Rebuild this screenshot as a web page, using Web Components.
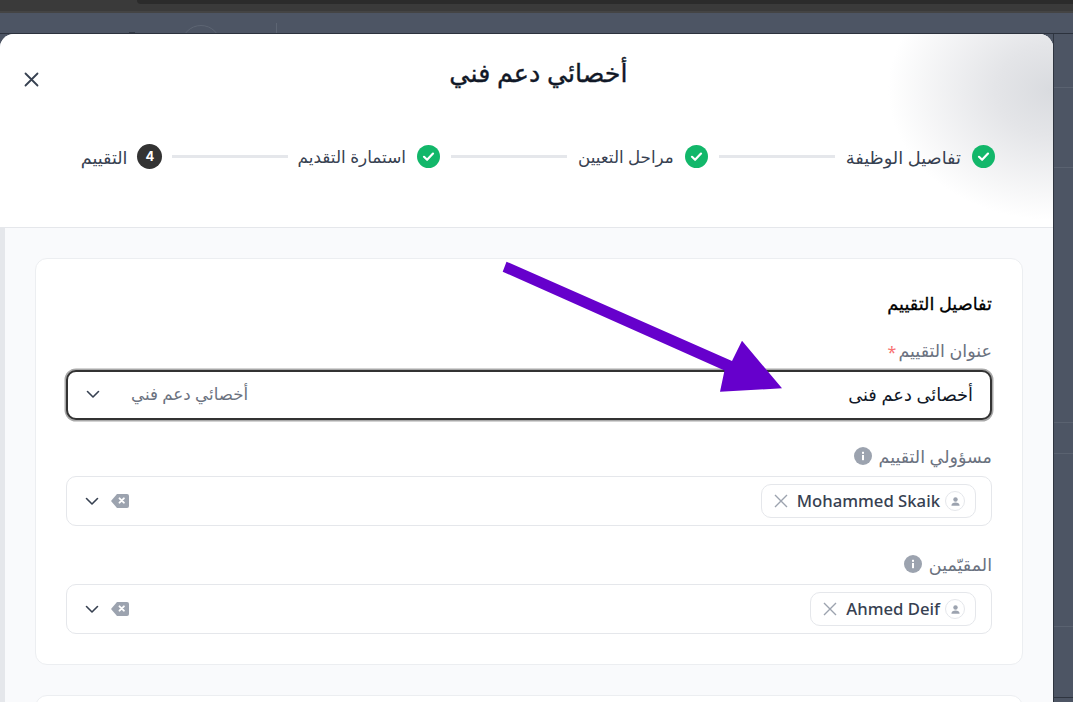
<!DOCTYPE html>
<html lang="ar">
<head>
<meta charset="utf-8">
<title>أخصائي دعم فني</title>
<style>
html, body { margin: 0; padding: 0; height: 100%; overflow: hidden; }
body { font-family: "Noto Sans", "DejaVu Sans", sans-serif; }
</style>
</head>
<body>
<x-page>
  <x-modal heading="أخصائي دعم فني">
    <x-step slot="steps" state="done" size="17.75">تفاصيل الوظيفة</x-step>
    <x-step slot="steps" state="done" size="16.7">مراحل التعيين</x-step>
    <x-step slot="steps" state="done" size="16.9" tight="2" trail="10">استمارة التقديم</x-step>
    <x-step slot="steps" state="current" number="4" last>التقييم</x-step>

    <x-card heading="تفاصيل التقييم">
      <x-field required low="8">
        <span slot="label">عنوان التقييم</span>
        <x-title-select placeholder="أخصائي دعم فني">أخصائى دعم فنى</x-title-select>
      </x-field>
      <x-field info gap="24" low="8">
        <span slot="label">مسؤولي التقييم</span>
        <x-tag-select><x-chip>Mohammed Skaik</x-chip></x-tag-select>
      </x-field>
      <x-field info gap="26" low="8">
        <span slot="label">المقيّمين</span>
        <x-tag-select><x-chip>Ahmed Deif</x-chip></x-tag-select>
      </x-field>
    </x-card>
    <x-card></x-card>
  </x-modal>
  <x-arrow></x-arrow>
</x-page>

<script>
const chevron = `<svg width="16" height="16" viewBox="0 0 16 16" fill="none" stroke="#374151" stroke-width="1.6" stroke-linecap="round" stroke-linejoin="round"><path d="M2.5 5.5 8 11l5.5-5.5"/></svg>`;
const arabic = `"Noto Sans", "DejaVu Sans", sans-serif`;

class XPage extends HTMLElement {
    constructor() {
        super();
        this.attachShadow({ mode: "open" }).innerHTML = `<style>
:host { display: flex; flex-direction: column; position: relative; width: 1073px; height: 702px; overflow: hidden; background: #4d5564; }
.chrome { flex: none; height: 11px; background: #3a3a3a; }
.tab { height: 4px; margin-left: 137px; background: #2b2b2b; border-bottom-left-radius: 8px; }
.edge { flex: none; height: 2px; background: #444; }
.strip { flex: none; height: 20px; position: relative; overflow: hidden; border-bottom: 1px solid #2c323d; }
.avatar { position: absolute; left: 181px; top: 12px; width: 38px; height: 38px; border: 1px solid #5d6573; border-radius: 50%; }
.divider { position: absolute; left: 276px; top: 10px; bottom: 0; width: 1px; background: #5d6573; }
.crumb { position: absolute; left: 129px; top: 19px; width: 6px; height: 1px; background: #333a46; }
.main { flex: 1; display: flex; min-height: 0; }
.gutter { flex: 1; display: flex; flex-direction: column; border-left: 1px solid #2f3540; }
.gutter div { flex: none; box-sizing: border-box; border-bottom: 1px solid #5a6270; }
.gutter div:last-child { border-bottom-color: #2f3540; }
</style>
<div class="chrome"><div class="tab"></div></div>
<div class="edge"></div>
<div class="strip"><div class="crumb"></div><div class="avatar"></div><div class="divider"></div></div>
<div class="main">
  <slot></slot>
  <div class="gutter"><div style="height:54px"></div><div style="height:80px"></div><div style="height:255px"></div><div style="height:31px"></div><div style="height:173px"></div><div style="height:71px"></div></div>
</div>`;
    }
}

class XModal extends HTMLElement {
    constructor() {
        super();
        this.attachShadow({ mode: "open" }).innerHTML = `<style>
:host { display: flex; flex-direction: column; direction: rtl; flex: none; width: 1053px; background: #f9fafc; border-radius: 14px 14px 0 0; overflow: hidden; color: #111827; }
header { flex: none; position: relative; height: 194px; box-sizing: border-box; background: radial-gradient(ellipse 165px 130px at 100% 56px, #d9dbdf 0%, #e4e5e8 35%, rgba(255,255,255,0) 100%), #fff; border-bottom: 1px solid #e5e7eb; }
h1 { margin: 0; padding: 20px 0 0 24px; height: 36px; text-align: center; font: 400 25.4px/36px ${arabic}; -webkit-text-stroke: 0.35px #111827; color: #111827; }
.close { position: absolute; left: 24px; top: 38px; width: 15px; height: 15px; }
.steps { display: flex; align-items: center; padding: 0 58px 0 0; margin-top: 54px; }
.body { flex: 1; display: flex; min-height: 0; }
.scroll { flex: none; width: 5px; background: #e5e7eb; }
.content { flex: 1; min-width: 0; padding: 30px 30px 0 30px; display: flex; flex-direction: column; gap: 30px; }
</style>
<header>
  <h1></h1>
  <svg class="close" viewBox="0 0 15 15" fill="none" stroke="#374151" stroke-width="1.8" stroke-linecap="round"><path d="M1.5 1.5l12 12M13.5 1.5l-12 12"/></svg>
  <div class="steps"><slot name="steps"></slot></div>
</header>
<div class="body">
  <div class="content"><slot></slot></div>
  <div class="scroll"></div>
</div>`;
    }

    connectedCallback() {
        this.shadowRoot.querySelector("h1").textContent = this.getAttribute("heading");
    }
}

class XStep extends HTMLElement {
    constructor() {
        super();
        this.attachShadow({ mode: "open" });
    }

    get size() {
        return this.getAttribute("size") || 17.6;
    }

    connectedCallback() {
        const done = this.getAttribute("state") === "done";
        const icon = done
            ? `<svg class="ico" width="23" height="23" viewBox="0 0 23 23"><circle cx="11.5" cy="11.5" r="11.5" fill="#12b76a"/><path d="M7 11.8l3.1 3L16 8.6" fill="none" stroke="#fff" stroke-width="2.2" stroke-linecap="round" stroke-linejoin="round"/></svg>`
            : `<span class="num">${this.getAttribute("number")}</span>`;
        const line = this.hasAttribute("last") ? "" : `<span class="line"></span>`;
        const trail = this.getAttribute("trail") || 11;
        const tight = this.getAttribute("tight") || 0;
        this.shadowRoot.innerHTML = `<style>
:host { display: flex; align-items: center; gap: ${done ? 11 : 10}px; margin-inline-end: ${trail}px; font: 400 ${this.size}px/24px ${arabic}; color: #374151; }
.ico { flex: none; display: block; }
.num { flex: none; width: 25px; height: 25px; border-radius: 50%; background: #333; color: #fff; font: 700 13px/25px Inter, sans-serif; text-align: center; }
.line { flex: none; width: 116px; height: 3px; background: #e5e7eb; margin-inline-start: -${tight}px; }
</style>${icon}<span><slot></slot></span>${line}`;
    }
}

class XCard extends HTMLElement {
    constructor() {
        super();
        this.attachShadow({ mode: "open" });
    }

    connectedCallback() {
        const heading = this.getAttribute("heading");
        this.shadowRoot.innerHTML = `<style>
:host { display: block; flex: none; background: #fff; border: 1px solid #eceef1; border-radius: 12px; padding: 32px 30px 30px; min-height: 40px; }
h2 { margin: 0 0 23px; font: 400 17.7px/24px ${arabic}; -webkit-text-stroke: 0.3px #000; color: #000; }
</style>${heading ? `<h2>${heading}</h2>` : ""}<slot></slot>`;
    }
}

class XField extends HTMLElement {
    constructor() {
        super();
        this.attachShadow({ mode: "open" });
    }

    connectedCallback() {
        const star = this.hasAttribute("required") ? `<span class="star">*</span>` : "";
        const info = this.hasAttribute("info")
            ? `<svg class="info" width="18" height="18" viewBox="0 0 18 18"><circle cx="9" cy="9" r="9" fill="#9ca3af"/><rect x="8" y="8" width="2" height="5.2" fill="#fff"/><rect x="8" y="4.8" width="2" height="2" fill="#fff"/></svg>`
            : "";
        const gap = this.getAttribute("gap") || 0;
        const low = this.getAttribute("low") || 7;
        this.shadowRoot.innerHTML = `<style>
:host { display: block; margin-top: ${gap}px; }
label { display: flex; align-items: center; height: 24px; margin-bottom: ${low}px; font: 400 17.5px/24px ${arabic}; color: #6b7280; }
.star { color: #f87171; margin: 3px 2px 0 0; font-size: 16px; }
.info { flex: none; margin-inline-start: 7px; }
</style><label><slot name="label"></slot>${star}${info}</label><slot></slot>`;
    }
}

class XTitleSelect extends HTMLElement {
    constructor() {
        super();
        this.attachShadow({ mode: "open" });
    }

    connectedCallback() {
        this.shadowRoot.innerHTML = `<style>
:host { display: flex; align-items: center; justify-content: space-between; height: 50px; box-sizing: border-box; border: 2px solid #333; border-radius: 10px; box-shadow: 0 0 0 1.5px #a8a8a8; padding: 0 17px 2px; background: #fff; font: 400 17.8px/24px ${arabic}; color: #111827; }
.left { display: flex; align-items: center; gap: 30px; direction: ltr; }
.ph { direction: rtl; color: #6b7280; font-size: 16.7px; }
svg { display: block; }
</style><span><slot></slot></span><span class="left">${chevron}<span class="ph">${this.getAttribute("placeholder")}</span></span>`;
    }
}

class XTagSelect extends HTMLElement {
    constructor() {
        super();
        this.attachShadow({ mode: "open" }).innerHTML = `<style>
:host { display: flex; align-items: center; justify-content: space-between; height: 50px; box-sizing: border-box; border: 1px solid #e5e7eb; border-radius: 10px; padding: 0 15px 0 17px; background: #fff; }
.tools { display: flex; align-items: center; gap: 11px; direction: ltr; }
svg { display: block; }
</style><slot></slot><span class="tools">${chevron}<svg width="18" height="14" viewBox="0 0 18 14"><path d="M6 0h10a2 2 0 0 1 2 2v10a2 2 0 0 1-2 2H6L0 7z" fill="#9ca3af"/><path d="M8.5 4.3l4.4 4.4M12.9 4.3 8.5 8.7" stroke="#fff" stroke-width="1.9" stroke-linecap="round"/></svg></span>`;
    }
}

class XChip extends HTMLElement {
    constructor() {
        super();
        this.attachShadow({ mode: "open" }).innerHTML = `<style>
:host { display: flex; align-items: center; gap: 5px; height: 34px; box-sizing: border-box; padding: 0 10px 0 12px; border: 1px solid #e5e7eb; border-radius: 10px; background: #fff; direction: rtl; font: 500 16.7px/24px "Noto Sans", sans-serif; color: #374151; }
.who { display: flex; align-items: center; justify-content: center; width: 20px; height: 20px; box-sizing: border-box; border: 1.5px solid #e5e7eb; border-radius: 50%; }
.x { margin-inline-start: 4px; }
svg { display: block; }
</style><span class="who"><svg width="11" height="11" viewBox="0 0 12 12" fill="#9ca3af"><circle cx="6" cy="3.8" r="2.4"/><path d="M1.5 10.5c0-2.4 2-3.5 4.5-3.5s4.5 1.1 4.5 3.5z"/></svg></span><span dir="ltr"><slot></slot></span><svg class="x" width="14" height="14" viewBox="0 0 14 14" fill="none" stroke="#9ca3af" stroke-width="1.4"><path d="M1 1l12 12M13 1 1 13"/></svg>`;
    }
}

// annotation drawn on top of the screenshot
class XArrow extends HTMLElement {
    constructor() {
        super();
        this.attachShadow({ mode: "open" }).innerHTML = `<style>
:host { position: absolute; left: 0; top: 0; pointer-events: none; }
svg { display: block; }
</style><svg width="1073" height="702" viewBox="0 0 1073 702"><path fill="#6600cc" d="M506.5 261.7 732 361 742 340.7 782 388.3 720 391.7 724.5 370.5 502.7 271.7z"/></svg>`;
    }
}

customElements.define("x-page", XPage);
customElements.define("x-modal", XModal);
customElements.define("x-step", XStep);
customElements.define("x-card", XCard);
customElements.define("x-field", XField);
customElements.define("x-title-select", XTitleSelect);
customElements.define("x-tag-select", XTagSelect);
customElements.define("x-chip", XChip);
customElements.define("x-arrow", XArrow);
</script>
</body>
</html>
